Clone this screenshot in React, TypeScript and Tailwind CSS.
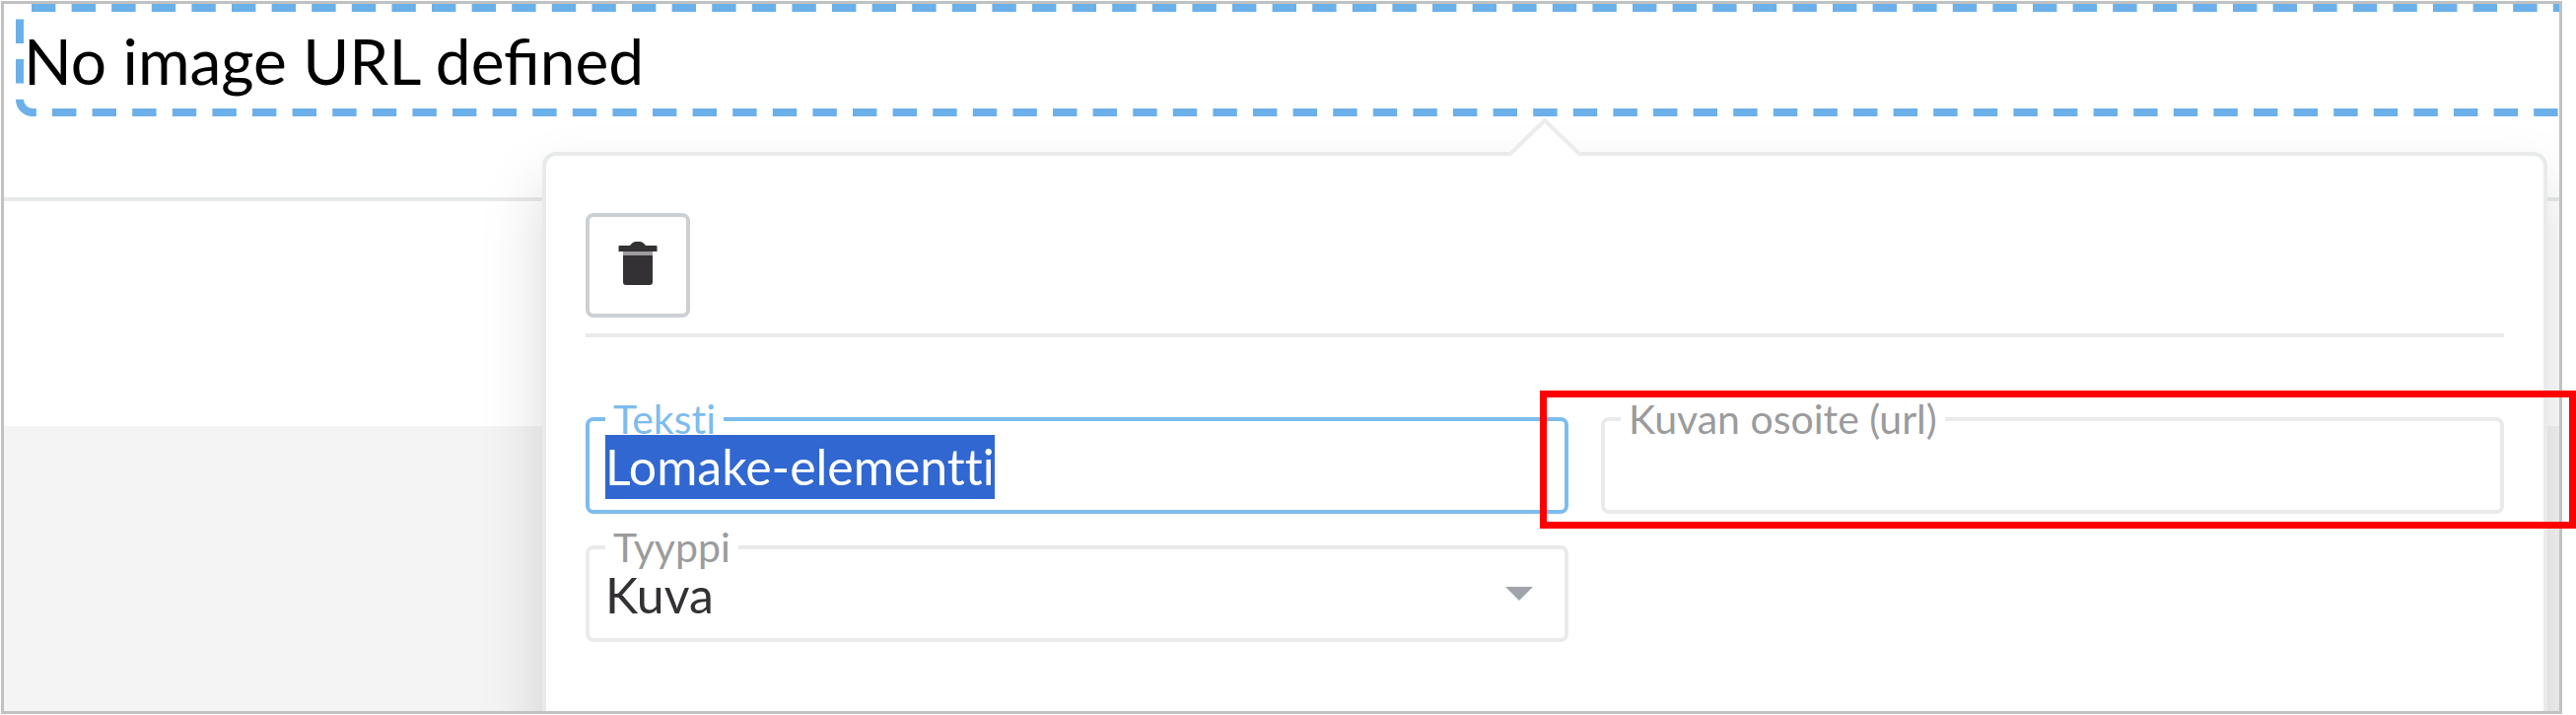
import React, { useEffect, useRef } from "react";

type FieldProps = {
  id: string;
  label: string;
  active?: boolean;
  children: React.ReactNode;
};

const Field: React.FC<FieldProps> = ({ id, label, active, children }) => {
  return (
    <div
      className={`relative h-[98px] rounded-lg border-4 pt-[14px] ${
        active ? "border-[#7dbcee]" : "border-[#e9eaeb]"
      }`}
    >
      <label
        htmlFor={id}
        className={`absolute left-4 -top-[26px] bg-white px-2 text-[41px] leading-[48px] ${
          active ? "text-[#7dbcee]" : "text-[#9b9b9d]"
        }`}
      >
        {label}
      </label>
      {children}
    </div>
  );
};

const TrashIcon: React.FC = () => {
  return (
    <svg viewBox="0 0 40 46" className="h-[46px] w-10" fill="#343135" aria-hidden="true">
      <path d="M12 5 Q15 1 18 1 H22 Q25 1 28 5 H38.500 Q39.500 5 39.500 6 V11 H.5 V6 Q.5 5 1.500 5 Z" />
      <path d="M5 11 H35 V15 H5 Z" fill="#9d9ca0" />
      <path d="M5 15 H35 V42 Q35 45 32 45 H8 Q5 45 5 42 Z" />
    </svg>
  );
};

const SelectionOutline: React.FC = () => {
  return (
    <svg
      className="absolute inset-0 h-full w-full"
      fill="none"
      stroke="#6cb0e9"
      strokeWidth="8"
      strokeDasharray="24.4 16.2"
      aria-hidden="true"
    >
      <path d="M28 4 H6000" />
      <path d="M16 15.5 V97 A13 13 0 0 0 29 110 H6000" />
    </svg>
  );
};

const ElementPopup: React.FC = () => {
  const textRef = useRef<HTMLInputElement>(null);

  useEffect(() => {
    textRef.current?.focus();
    textRef.current?.select();
  }, []);

  return (
    <div className="absolute left-[546px] right-3 top-[150px] -bottom-10 rounded-[14px] border-4 border-[#e8eaeb] bg-white px-10 pt-[58px] shadow-[0_32px_64px_rgba(0,0,0,0.15)]">
      <svg
        viewBox="0 0 80 42"
        className="absolute -top-[40px] left-1/2 h-[42px] w-20 -translate-x-1/2"
        aria-hidden="true"
      >
        <path d="M4 42 V38 L40 3 L76 38 V42 Z" fill="#fff" />
        <path d="M2 38 H5 L40 4 L75 38 H78" fill="none" stroke="#ebecec" strokeWidth="4" />
      </svg>

      <div className="border-b-4 border-[#e9eaeb] pb-4">
        <button
          type="button"
          aria-label="Poista"
          className="flex h-[106px] w-[106px] items-center justify-center rounded-lg border-4 border-[#cdd0d3] bg-white pb-1"
        >
          <TrashIcon />
        </button>
      </div>

      <form className="mt-[81px] grid grid-cols-[996fr_915fr] gap-x-[33px] gap-y-8 [font-variant-ligatures:none]">
        <Field id="text" label="Teksti" active>
          <input
            id="text"
            ref={textRef}
            type="text"
            defaultValue="Lomake-elementti"
            className="relative block h-[65px] w-full bg-transparent px-4 text-[50px] leading-[65px] text-[#343135] outline-none selection:bg-[#3067d1] selection:text-white [font-variant-ligatures:none]"
          />
        </Field>
        <Field id="image-url" label="Kuvan osoite (url)">
          <input
            id="image-url"
            type="text"
            className="relative block h-[65px] w-full bg-transparent px-4 text-[50px] leading-[65px] text-[#343135] outline-none"
          />
        </Field>
        <Field id="type" label="Tyyppi">
          <select
            id="type"
            defaultValue="image"
            className="relative block h-[65px] w-full appearance-none bg-transparent px-4 text-[50px] leading-[65px] text-[#343135] outline-none"
          >
            <option value="image">Kuva</option>
          </select>
          <svg
            viewBox="0 0 28 14"
            className="pointer-events-none absolute right-8 top-[38px] h-[14px] w-7"
            fill="#a0a4aa"
            aria-hidden="true"
          >
            <path d="M0 0 H28 L14 14 Z" />
          </svg>
        </Field>
      </form>
    </div>
  );
};

export default function App() {
  return (
    <div className="relative bg-white py-px pl-px pr-[14px] font-['Lato',sans-serif]">
      <div className="relative overflow-hidden border-[3px] border-[#c0c2c2]">
        <div className="h-[200px] border-b-4 border-[#e8eaea]">
          <div className="relative h-[114px] pl-5 pt-5">
            <SelectionOutline />
            <p className="relative text-[64px] leading-[76px] text-black">No image URL defined</p>
          </div>
        </div>
        <div className="h-[228px]" />
        <div className="h-[289px] bg-[#f4f4f4]" />
        <ElementPopup />
      </div>

      {/* highlight around the image url field */}
      <div className="pointer-events-none absolute right-0 top-[396px] h-[140px] w-[1051px] border-[7px] border-[#ff0000]" />
    </div>
  );
}
